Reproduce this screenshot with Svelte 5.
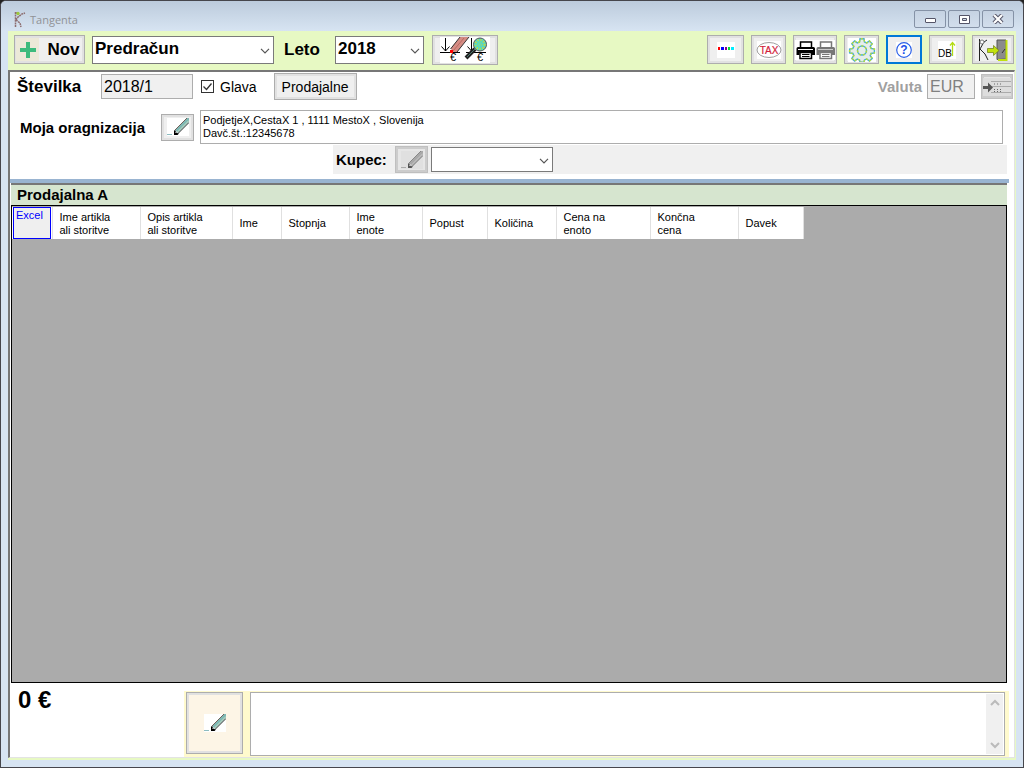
<script>
  let docType = $state('Predračun');
  let year = $state('2018');
  let number = $state('2018/1');
  let currency = $state('EUR');
  let showHead = $state(true);
  let organisation = $state('PodjetjeX,CestaX 1 , 1111 MestoX , Slovenija\nDavč.št.:12345678');
  let buyer = $state('');
  let note = $state('');

  const columns = [
    { lines: ['Ime artikla', 'ali storitve'], width: 88 },
    { lines: ['Opis artikla', 'ali storitve'], width: 92 },
    { lines: ['Ime'], width: 49 },
    { lines: ['Stopnja'], width: 68 },
    { lines: ['Ime', 'enote'], width: 73 },
    { lines: ['Popust'], width: 65 },
    { lines: ['Količina'], width: 69 },
    { lines: ['Cena na', 'enoto'], width: 94 },
    { lines: ['Končna', 'cena'], width: 88 },
    { lines: ['Davek'], width: 65 }
  ];

  const gear =
    'M11.5 4 12 .8h4l.5 3.2 2.200.9 2.700-2 2.800 2.800-2 2.700.9 2 3.300.6v4l-3.300.5-.9 2.100 2 2.700-2.800 2.700-2.700-2-2.200.9-.5 2.300h-4l-.5-2.300-2.200-.9-2.700 2-2.800-2.700 2-2.700-.9-2.100L1.600 15v-4l3.300-.6.9-2-2-2.700 2.800-2.800 2.700 2z';
</script>

{#snippet chevron()}
  <svg class="chevron" width="10" height="6" viewBox="0 0 10 6" aria-hidden="true"><path d="M1 .8 5 4.8 9 .8" fill="none" stroke="#555" stroke-width="1.2" /></svg>
{/snippet}

{#snippet pencil(muted)}
  <svg width="22" height="18" viewBox="0 0 22 18" aria-hidden="true">
    <rect width="22" height="18" fill={muted ? '#e0e0e0' : '#fff'} />
    <path d="M0 16.5h5" stroke={muted ? '#aaa' : '#8dbcc0'} />
    <path d="M8 12 20 0h2v4L11 15z" fill={muted ? '#a8a8a8' : '#7fb8b4'} />
    <path d="M10.500 14 22 2.500" stroke={muted ? '#c8c8c8' : '#c9dcc0'} />
    <path d="M7.500 12.500 20 0" stroke={muted ? '#777' : '#5c4038'} stroke-width=".8" />
    <path d="M11 15.500 22 4.500" stroke={muted ? '#666' : '#222'} stroke-width=".9" />
    <path d="M7 12.500v4.500h3.500l1.500-1.500-2-.5-1.500-2.500z" fill={muted ? '#555' : '#000'} />
    <path d="M8.500 13.500h1v1.500h-1z" fill="#fff" />
  </svg>
{/snippet}

{#snippet printer(color, band)}
  <path d="M4.500 1h11v6h-11z" fill="#fff" stroke={color} stroke-width="1.5" />
  <path d="M2 6h15.500q1.500 0 1.500 1.500V14h-3v-2.500H3.500V14H.500V7.500Q.500 6 2 6z" fill={color} />
  <path d="M2 8.500h15" stroke={band} />
  <path d="M4 11.500h11.500v6H4z" fill="#fff" stroke={color} stroke-width="1.5" />
  <path d="M6 13.500h7.500M6 15.500h7.500" stroke={color} />
{/snippet}

<div class="window">
  <header class="titlebar">
    <svg width="12" height="17" viewBox="0 0 12 17" aria-hidden="true">
      <path d="M1.500 1v15M2 9l4 3 1 4M2 9l2-3 4-3 3-1M2 2h3" fill="none" stroke="#8d6e70" stroke-width="1.5" stroke-dasharray="2 .6" />
      <circle cx="4" cy="2.500" r="1.700" fill="#9cc83c" />
    </svg>
    <h1>Tangenta</h1>
    <button class="caption" aria-label="Minimize"><svg width="12" height="10" viewBox="0 0 12 10"><rect x="1.500" y="4.500" width="10" height="4" rx=".5" fill="#fff" stroke="#555568" /></svg></button>
    <button class="caption" aria-label="Maximize"><svg width="12" height="10" viewBox="0 0 12 10"><path d="M1.500 1.500h10v8h-10z" fill="#fff" stroke="#555568" /><path d="M4.500 4.500h4v2h-4z" fill="#cfd9e6" stroke="#555568" /></svg></button>
    <button class="caption" aria-label="Close"><svg width="12" height="10" viewBox="0 0 12 10"><path d="m2 1 8 8M10 1 2 9" stroke="#555568" stroke-width="4.200" /><path d="m2 1 8 8M10 1 2 9" stroke="#fff" stroke-width="2.200" /></svg></button>
  </header>

  <div class="client">
    <nav class="toolbar">
      <button class="btn new">
        <span class="plus"><svg width="16" height="16" viewBox="0 0 16 16" aria-hidden="true"><path d="M8 0v16M0 8h16" stroke="#3dbb7d" stroke-width="4" /></svg></span>
        Nov
      </button>
      <div class="combo type">
        <select aria-label="Vrsta dokumenta" bind:value={docType}><option>Predračun</option></select>
        {@render chevron()}
      </div>
      <label class="year-label" for="year">Leto</label>
      <div class="combo year">
        <select id="year" bind:value={year}><option>2018</option></select>
        {@render chevron()}
      </div>
      <button class="btn view" aria-label="Način prikaza">
        <svg width="50" height="26" viewBox="0 0 50 26">
          <path d="M0 0h50v26H0z" fill="#fff" />
          <path d="M5.500 1v13M1.500 9.500l4 4.500 4-4.500M31.500 1v13M27.500 9.500l4 4.500 4-4.500M0 15.500h20M26 15.500h20" fill="none" stroke="#000" />
          <path d="M20 0h9L17 15h-5l-1-4z" fill="#d58c84" />
          <path d="M20 0 10.500 12M29 0 17 15" stroke="#333" /><path d="M24 1 13 14" stroke="#b96a62" />
          <path d="M10 13h3v3h-3z" fill="#f00" />
          <path d="m26 21 9-9" stroke="#222" stroke-width="4" /><path d="m27 20 8-8" stroke="#48776c" />
          <circle cx="40" cy="7.500" r="6.500" fill="#56d8c2" stroke="#555" />
          <circle cx="40" cy="7.500" r="4.500" fill="none" stroke="#b9d94c" stroke-width="2" stroke-dasharray="1.500 1.500" />
          <circle cx="40" cy="7.500" r="1.500" fill="none" stroke="#b9d94c" stroke-dasharray="1 1" />
          <text x="10" y="24" font-size="11">€</text><text x="37" y="24" font-size="11">€</text>
        </svg>
      </button>

      <div class="tools">
        <button class="btn w37" aria-label="Barve">
          <svg width="18" height="16" viewBox="0 0 18 16" shape-rendering="crispEdges"><path d="M0 0h18v16H0z" fill="#fff" /><path d="M1 5h2v3H1z" fill="#f00" /><path d="M4 5h3v3H4z" fill="#00f" /><path d="M8 5h2v3H8z" fill="#808" /><path d="M11 5h2v3h-2z" fill="#0d3" /><path d="M14 5h3v3h-3z" fill="#0ef" /></svg>
        </button>
        <button class="btn w35" aria-label="Davki">
          <svg width="26" height="18" viewBox="0 0 26 18"><path d="M1 0h24v18H1z" fill="#fff" /><ellipse cx="13" cy="9" rx="12" ry="7.500" fill="#fff" stroke="#888" stroke-width=".8" /><text x="13" y="12.500" font-size="10" text-anchor="middle" fill="#d21f3c" stroke="#d21f3c" stroke-width=".2">TAX</text></svg>
        </button>
        <button class="btn w44" aria-label="Tiskanje">
          <svg width="40" height="20" viewBox="0 0 40 20"><path d="M0 0h40v20H0z" fill="#fff" /><g transform="translate(1 1)">{@render printer('#000', '#fff')}</g><g transform="translate(21 1)">{@render printer('#777', '#ccc')}</g></svg>
        </button>
        <button class="btn w35" aria-label="Nastavitve">
          <svg width="28" height="24" viewBox="0 0 28 24">
            <path d="M0 0h28v24H0z" fill="#fff" />
            <g fill="#e6eceb" stroke="#4baed1" stroke-width="1.4"><path d={gear} /><circle cx="14" cy="12.500" r="4.500" /></g>
            <g fill="none" stroke="#b5de38" stroke-width="1.4" stroke-dasharray="2 2"><path d={gear} /><circle cx="14" cy="12.500" r="4.500" /></g>
          </svg>
        </button>
        <button class="btn w36 focused" aria-label="Pomoč">
          <svg width="16" height="16" viewBox="0 0 16 16"><path d="M0 0h16v16H0z" fill="#fff" /><circle cx="8" cy="8" r="7.300" fill="#fff" stroke="#2b60e8" stroke-width="1.2" /><text x="8" y="12" text-anchor="middle" font-size="12" font-weight="bold" fill="#2050e8">?</text></svg>
        </button>
        <button class="btn w36" aria-label="Baza podatkov">
          <svg width="18" height="18" viewBox="0 0 18 18"><path d="M0 0h18v18H0z" fill="#fff" /><text x="0" y="16" font-size="10">DB</text><path d="M14.500 15V2M12 4.500l2.500-3 2.500 3" fill="none" stroke="#b4dc14" stroke-width="1.3" /></svg>
        </button>
        <button class="btn w42" aria-label="Izhod">
          <svg width="30" height="22" viewBox="0 0 30 22">
            <path d="M1.500 0v22M2 10l5 5 3 6M2 10l4-7 3-2" fill="none" stroke="#222" /><circle cx="4" cy="3" r="2" fill="#fff" stroke="#777" />
            <path d="M19 1h9v19l-9 .5z" fill="#8b8b8b" stroke="#555" /><path d="M28.500 1v20H20" fill="none" stroke="#bfe010" stroke-width="2" /><path d="m24 14 3-4" stroke="#333" />
            <path d="M9.500 9.500h6v-3l5.500 5-5.500 5v-3h-6z" fill="#c2e20d" stroke="#6c7b12" stroke-width=".7" />
          </svg>
        </button>
      </div>
    </nav>

    <main class="panel">
      <section class="row number-row">
        <label class="caption-text big" for="number">Številka</label>
        <input id="number" class="field" type="text" readonly bind:value={number} />
        <label class="check">
          <input type="checkbox" bind:checked={showHead} />
          <span>Glava</span>
        </label>
        <button class="btn shops">Prodajalne</button>
        <label class="currency-label" for="currency">Valuta</label>
        <input id="currency" class="field currency" type="text" disabled bind:value={currency} />
        <button class="btn off insert" disabled aria-label="Zamenjaj valuto">
          <svg width="28" height="18" viewBox="0 0 28 18"><path d="M0 0h28v18H0z" fill="#ddd" /><path d="M8 3.500h20M8 8.500h20M8 14.500h20" stroke="#aaa" /><path d="M11 6h7M11 11.500h7M11 13.500h7" stroke="#666" stroke-dasharray="1 2" /><path d="M0 8h5V4.500l5 5-5 5V11H0z" fill="#555" /></svg>
        </button>
      </section>

      <section class="row org-row">
        <label class="caption-text org-label" for="organisation">Moja oragnizacija</label>
        <button class="btn edit" aria-label="Uredi organizacijo">{@render pencil(false)}</button>
        <textarea id="organisation" readonly bind:value={organisation}></textarea>
      </section>

      <section class="buyer-row">
        <label class="caption-text" for="buyer">Kupec:</label>
        <button class="btn off edit" disabled aria-label="Uredi kupca">{@render pencil(true)}</button>
        <div class="combo buyer">
          <select id="buyer" bind:value={buyer}><option value=""></option></select>
          {@render chevron()}
        </div>
      </section>

      <div class="splitter"></div>

      <section class="shop">
        <h2>Prodajalna A</h2>
        <div class="grid">
          <table>
            <thead>
              <tr>
                <th class="excel" scope="col"><button>Excel</button></th>
                {#each columns as column}
                  <th scope="col" style:width="{column.width}px">
                    {#each column.lines as line}<div>{line}</div>{/each}
                  </th>
                {/each}
              </tr>
            </thead>
          </table>
        </div>
      </section>

      <footer>
        <output>0 €</output>
        <div class="note">
          <button class="btn note-edit" aria-label="Uredi opombo">{@render pencil(false)}</button>
          <div class="note-box">
            <textarea aria-label="Opomba" bind:value={note}></textarea>
            <div class="scroll" aria-hidden="true">
              <svg width="10" height="8" viewBox="0 0 10 8"><path d="m1 6 4-4 4 4" fill="none" stroke="#bbb" stroke-width="2" /></svg>
              <svg width="10" height="8" viewBox="0 0 10 8"><path d="m1 2 4 4 4-4" fill="none" stroke="#bbb" stroke-width="2" /></svg>
            </div>
          </div>
        </div>
      </footer>
    </main>
  </div>
</div>

<style>
  :global(body) { margin: 0; background: #222; }
  .window, .window * { box-sizing: border-box; }
  .window {
    display: flex;
    flex-direction: column;
    min-height: 100vh;
    padding: 0 7px 7px;
    border: 1px solid #46464c;
    border-radius: 6px 6px 0 0;
    background: #d7e4f2;
    font-family: "Liberation Sans", Arial, sans-serif;
    color: #000;
  }
  button, input, select, textarea { font-family: inherit; color: inherit; border-radius: 0; margin: 0; }
  svg { display: block; flex: none; }

  .titlebar {
    display: flex;
    align-items: center;
    height: 30px;
    margin: 0 -7px;
    padding: 6px 9px 0 13px;
    gap: 2px;
    border-radius: 5px 5px 0 0;
    background: linear-gradient(#bccbdc, #d7e4f2);
  }
  h1 {
    flex: 1;
    margin: 0 0 0 2px;
    font: 11px "Open Sans", "Noto Sans", sans-serif;
    color: #909296;
  }
  .caption {
    display: grid;
    place-items: center;
    width: 32px;
    height: 18px;
    padding: 0;
    border: 1px solid #8592a6;
    border-radius: 2px;
    background: linear-gradient(#c5d2e2, #d2deec);
  }

  .client { flex: 1; display: flex; flex-direction: column; background: #e7f9c3; padding-bottom: 2px; }
  .toolbar { display: flex; align-items: center; height: 39px; padding: 0 2px 2px 6px; }

  .btn {
    display: flex;
    align-items: center;
    justify-content: center;
    flex: none;
    height: 29px;
    padding: 0;
    border: 1px solid #adadad;
    background: #efefef;
    box-shadow: inset 0 0 0 2px #e1e1e1;
  }
  .off { background: #e6e6e6; border-color: #bfbfbf; box-shadow: inset 0 0 0 2px #ccc; }
  .focused { border: 2px solid #0078d7; box-shadow: none; }
  .w35 { width: 35px; }
  .w36 { width: 36px; }
  .w37 { width: 37px; }
  .w42 { width: 42px; }
  .w44 { width: 44px; }

  .new { width: 71px; gap: 8px; padding-right: 3px; font-size: 17px; font-weight: bold; }
  .plus { display: grid; place-items: center; width: 23px; height: 23px; background: #ece9d8; }

  .combo { position: relative; flex: none; height: 28px; }
  .combo select {
    display: block;
    width: 100%;
    height: 100%;
    padding: 0 20px 2px 2px;
    border: 1px solid #7a7a7a;
    background: #fff;
    appearance: none;
    font-size: 17px;
    font-weight: bold;
  }
  .chevron { position: absolute; right: 4px; top: 50%; margin-top: -2px; pointer-events: none; }
  .type { width: 182px; margin-left: 7px; }
  .year { width: 89px; }
  .year-label { width: 61px; padding-left: 10px; font-size: 17px; font-weight: bold; }
  .view { width: 66px; height: 30px; margin-left: 8px; }
  .tools { display: flex; gap: 7px; margin-left: auto; }

  .panel {
    flex: 1;
    display: flex;
    flex-direction: column;
    min-width: 0;
    background: #fff;
    border-style: solid;
    border-color: #777 #e3e3e3 #e3e3e3 #777;
    border-width: 2px 1px 1px 2px;
    margin-right: 1px;
  }
  .row { display: flex; }
  .caption-text { font-size: 15px; font-weight: bold; white-space: nowrap; }
  .big { font-size: 17px; }

  .number-row { align-items: center; height: 29px; padding: 0 1px 0 7px; }
  .number-row .big { width: 84px; }
  .field { height: 25px; width: 92px; padding: 0 2px; border: 1px solid #adadad; background: #f0f0f0; font-size: 16px; }
  .check { display: flex; align-items: center; gap: 6px; margin-left: 8px; font-size: 14px; }
  .check input {
    appearance: none;
    width: 13px;
    height: 13px;
    border: 1px solid #333;
    background: #fff;
  }
  .check input:checked {
    background: url("data:image/svg+xml,%3Csvg xmlns='http://www.w3.org/2000/svg' viewBox='0 0 11 11'%3E%3Cpath d='M1.500 5.500 4.500 8.500 9.500 2.500' fill='none' stroke='%23333' stroke-width='1.3'/%3E%3C/svg%3E") #fff;
  }
  .shops { width: 83px; height: 27px; margin-left: 17px; font-size: 14px; }
  .currency-label { margin-left: auto; font-size: 15px; font-weight: bold; color: #a0a0a0; }
  .currency { width: 48px; margin-left: 5px; color: #808080; }
  .insert { width: 32px; height: 25px; margin-left: 6px; }

  .org-row { align-items: center; margin-top: 9px; padding-right: 11px; }
  .org-label { width: 151px; padding-left: 10px; }
  .edit { width: 33px; height: 27px; }
  .org-row textarea {
    flex: 1;
    height: 34px;
    margin-left: 6px;
    padding: 3px 2px;
    border: 1px solid #adadad;
    resize: none;
    overflow: hidden;
    font-size: 11px;
    line-height: 13px;
  }

  .buyer-row {
    display: flex;
    align-items: center;
    height: 29px;
    margin: 1px 7px 0 323px;
    padding-left: 3px;
    background: #f0f0f0;
  }
  .buyer-row label { width: 59px; }
  .buyer { width: 122px; height: 25px; margin-left: 3px; }

  .splitter { height: 4px; margin: 5px 5px 0 0; background: #99b4d1; }

  .shop { flex: 1; display: flex; flex-direction: column; margin: 0 7px 0 1px; border-top: 2px solid #777; }
  h2 { height: 20px; margin: 0; padding-left: 6px; background: #d6e5cf; font-size: 15px; line-height: 19px; }
  .grid { flex: 1; border: 1px solid #000; background: #ababab; }
  table { margin-top: 1px; border-collapse: collapse; table-layout: fixed; width: 791px; }
  th {
    height: 32px;
    padding: 1px 0 0 7px;
    border-right: 1px solid #e0e0e0;
    background: #fff;
    text-align: left;
    vertical-align: middle;
    font-size: 11px;
    font-weight: normal;
    line-height: 13px;
  }
  .excel { width: 40px; padding: 0 1px; }
  .excel button {
    display: flex;
    width: 38px;
    height: 32px;
    padding: 1px 2px;
    border: 1px solid #00f;
    background: #efefef;
    color: #00f;
    font-size: 11px;
    line-height: 13px;
  }

  footer { display: flex; margin-right: 5px; padding-top: 8px; }
  output { width: 174px; padding-left: 8px; margin-top: -5px; font-size: 24px; font-weight: bold; line-height: 28px; }
  .note { flex: 1; display: flex; gap: 7px; padding: 1px 4px 1px 2px; background: #fffacd; }
  .note-edit { width: 57px; height: 62px; background: #fdf5e6; }
  .note-box { flex: 1; display: flex; height: 64px; padding: 1px; border: 1px solid #adadad; background: #fff; }
  .note-box textarea { flex: 1; border: 0; padding: 2px; resize: none; overflow: hidden; }
  .scroll { display: flex; flex-direction: column; justify-content: space-between; align-items: center; width: 17px; padding: 5px 0; background: #f0f0f0; }
</style>
